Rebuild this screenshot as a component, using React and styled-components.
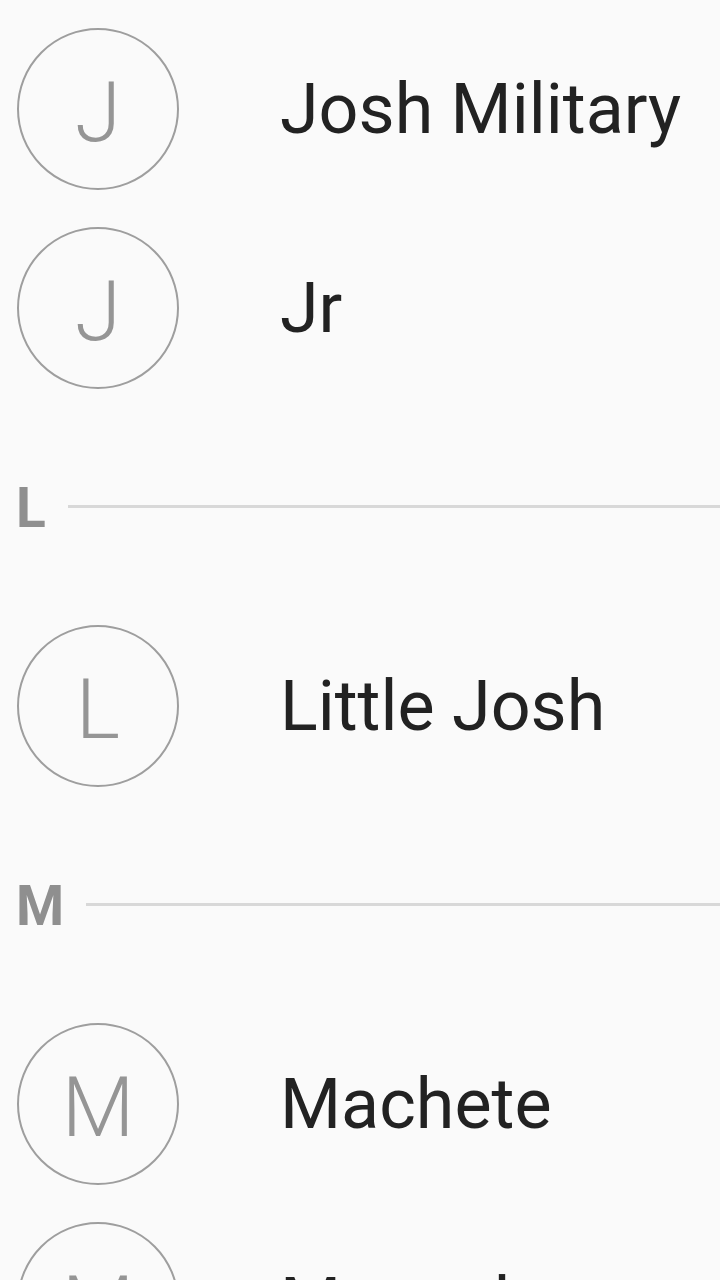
import React from "react";
import styled, { createGlobalStyle } from "styled-components";

const sections = [
  { letter: null, contacts: ["Josh Military", "Jr"] },
  { letter: "L", contacts: ["Little Josh"] },
  { letter: "M", contacts: ["Machete", "Manuel"] },
];

const ContactList = () => {
  return (
    <>
      <GlobalStyle />
      <Screen>
        {sections.map((section, idx) => (
          <React.Fragment key={idx}>
            {section.letter && (
              <SectionHeader>
                <HeaderLetter>{section.letter}</HeaderLetter>
                <Divider />
              </SectionHeader>
            )}
            {section.contacts.map((name) => (
              <Row key={name}>
                <Avatar>
                  <AvatarLetter>{name[0]}</AvatarLetter>
                </Avatar>
                <Name>{name}</Name>
              </Row>
            ))}
          </React.Fragment>
        ))}
      </Screen>
    </>
  );
};

export default ContactList;

const GlobalStyle = createGlobalStyle`
  html, body {
    margin: 0;
    padding: 0;
    background: #fafafa;
    overflow: hidden;
  }
`;

const Screen = styled.div`
  width: 720px;
  height: 1280px;
  overflow: hidden;
  background: #fafafa;
  padding-top: 9px;
  box-sizing: border-box;
  font-family: Roboto, "Noto Sans", sans-serif;
`;

const Row = styled.div`
  height: 199px;
  display: flex;
  align-items: center;
  padding-left: 17px;
`;

const Avatar = styled.div`
  width: 162px;
  height: 162px;
  box-sizing: border-box;
  border: 2px solid #9e9e9e;
  border-radius: 50%;
  display: flex;
  align-items: center;
  justify-content: center;
  flex-shrink: 0;
`;

const AvatarLetter = styled.span`
  font-size: 84px;
  font-weight: 300;
  color: #959595;
  line-height: 1;
  margin-top: 8px;
`;

const Name = styled.div`
  margin-left: 101px;
  font-size: 70px;
  color: #222;
  line-height: 1;
  white-space: nowrap;
`;

const SectionHeader = styled.div`
  height: 199px;
  display: flex;
  align-items: center;
  padding-left: 16px;
`;

const HeaderLetter = styled.span`
  font-size: 55px;
  font-weight: 700;
  color: #8f8f8f;
  line-height: 1;
  margin-top: 4px;
`;

const Divider = styled.div`
  flex: 1;
  height: 3px;
  background: #d8d8d8;
  margin-left: 22px;
`;
